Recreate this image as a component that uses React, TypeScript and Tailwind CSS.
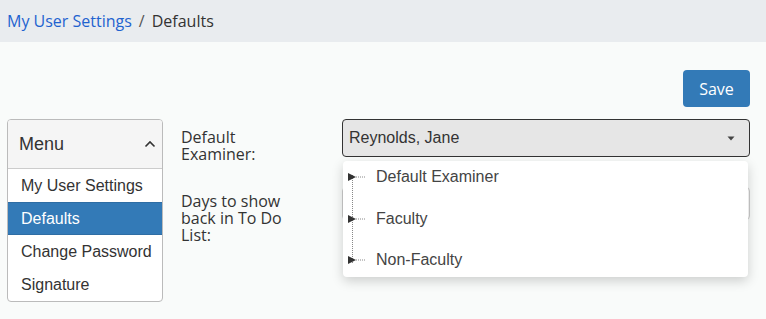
import React from 'react';

const menuItems = ['My User Settings', 'Defaults', 'Change Password', 'Signature'];
const options = ['Default Examiner', 'Faculty', 'Non-Faculty'];

function TreeArrow() {
  return (
    <svg width="18" height="10" viewBox="0 0 18 10" className="shrink-0">
      <polygon points="0,1 8,5 0,9" fill="#333" />
      <line x1="8" y1="5" x2="18" y2="5" stroke="#888" strokeWidth="1" strokeDasharray="1 1" />
    </svg>
  );
}

export default function App() {
  return (
    <div className="min-h-[319px] bg-[#f9fbfa] text-[#333] font-['Liberation_Sans',Arial,sans-serif]">
      {/* Breadcrumb */}
      <div className="h-[42px] bg-[#e9ecef] px-[7px] flex items-center text-[16px] font-['Open_Sans',sans-serif]">
        <span className="text-[#1f63cf]">My User Settings</span>
        <span className="mx-[7px] text-[#555]">/</span>
        <span className="text-[#333]">Defaults</span>
      </div>

      <div className="pl-[7px] pr-[16px] pt-[28px]">
        <div className="flex justify-end">
          <button className="w-[67px] h-[37px] bg-[#337ab7] text-white rounded-[4px] text-[16px] font-['Open_Sans',sans-serif]">
            Save
          </button>
        </div>

        <div className="flex mt-[12px]">
          {/* Menu */}
          <div className="w-[156px] border border-[#bbb] rounded-[4px] bg-white overflow-hidden shrink-0">
            <div className="h-[49px] bg-[#f5f5f5] border-b border-[#ccc] flex items-center justify-between pl-[11px] pr-[6px]">
              <span className="text-[18px] text-[#333]">Menu</span>
              <svg width="12" height="8" viewBox="0 0 12 8">
                <polyline points="1.5,6.5 6,2 10.5,6.5" fill="none" stroke="#333" strokeWidth="1.6" />
              </svg>
            </div>
            {menuItems.map((m) => (
              <div
                key={m}
                className={`h-[33px] flex items-center pl-[13px] text-[16px] whitespace-nowrap ${
                  m === 'Defaults' ? 'bg-[#337ab7] text-white border-y border-[#2e6da4]' : 'text-[#333]'
                }`}
              >
                {m}
              </div>
            ))}
          </div>

          {/* Fields */}
          <div className="flex-1 ml-[18px] flex flex-col gap-[24px]">
            <div className="flex">
              <div className="w-[161px] shrink-0 pt-[10px] pr-[50px] text-[16px] leading-[17px] font-['Open_Sans',sans-serif] text-[#333]">
                Default Examiner:
              </div>
              <div className="relative flex-1">
                <div className="h-[38px] bg-[#e6e6e6] border border-[#333] rounded-[4px] flex items-center justify-between pl-[6px] pr-[14px] text-[16px] text-[#333]">
                  <span>Reynolds, Jane</span>
                  <svg width="8" height="5" viewBox="0 0 8 5">
                    <polygon points="0.5,0.5 7.5,0.5 4,4.5" fill="#444" />
                  </svg>
                </div>

                {/* Dropdown */}
                <div className="absolute z-10 left-[1px] right-[2px] top-[42px] h-[116px] bg-white rounded-[4px] shadow-[0_4px_12px_rgba(0,0,0,0.18)]">
                  <div className="relative flex flex-col gap-[9.5px]">
                    <div className="absolute left-[9px] top-[14px] h-[88px] border-l border-dotted border-[#888]" />
                    {options.map((o) => (
                      <div key={o} className="h-[32px] flex items-center pl-[5px] text-[16px] text-[#444] relative">
                        <TreeArrow />
                        <span className="ml-[10px]">{o}</span>
                      </div>
                    ))}
                  </div>
                </div>
              </div>
            </div>

            <div className="flex">
              <div className="w-[161px] shrink-0 pt-[6px] pr-[50px] text-[16px] leading-[17px] font-['Open_Sans',sans-serif] text-[#333]">
                Days to show back in To Do List:
              </div>
              <div className="flex-1">
                <div className="h-[33px] bg-white border border-[#ccc] rounded-[4px]" />
              </div>
            </div>
          </div>
        </div>
      </div>
    </div>
  );
}
